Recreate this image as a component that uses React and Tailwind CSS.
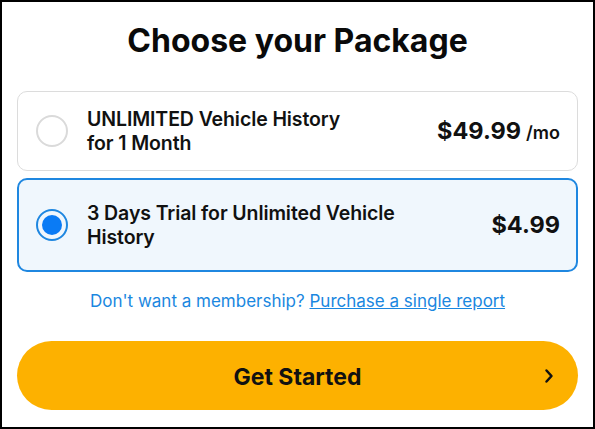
import React from 'react';

const plans = [
	{ id: 1, lines: ['UNLIMITED Vehicle History', 'for 1 Month'], price: '$49.99', suffix: '/mo', selected: false },
	{ id: 2, lines: ['3 Days Trial for Unlimited Vehicle', 'History'], price: '$4.99', suffix: null, selected: true },
];

const PlanCard = ({ plan }) => {
	return (
		<div
			className={
				plan.selected
					? 'h-[94px] rounded-[10px] border-2 border-[#1f87e0] bg-[#f0f7fd] flex items-center pl-[17px] pr-[16px]'
					: 'h-[80px] rounded-[10px] border border-[#dcdcdc] bg-white flex items-center pl-[18px] pr-[17px]'
			}
		>
			{plan.selected ? (
				<span className="w-[32px] h-[32px] rounded-full border-2 border-[#1f87e0] flex items-center justify-center shrink-0">
					<span className="w-[20px] h-[20px] rounded-full bg-[#0a7bf5]" />
				</span>
			) : (
				<span className="w-[32px] h-[32px] rounded-full border-2 border-[#dadada] shrink-0" />
			)}
			<p className="ml-[19px] text-[19.5px] leading-[24px] font-semibold text-[#111] whitespace-nowrap tracking-[-0.1px]">
				{plan.lines[0]}
				<br />
				{plan.lines[1]}
			</p>
			<div className="ml-auto flex items-baseline">
				<span className="text-[23.5px] font-bold text-[#111]">{plan.price}</span>
				{plan.suffix && <span className="ml-[5px] text-[18px] font-semibold text-[#111]">{plan.suffix}</span>}
			</div>
		</div>
	);
};

export default function App() {
	return (
		<div className="w-[595px] h-[429px] border-2 border-black bg-white px-[15px] font-['Inter',sans-serif]">
			<h1 className="pt-[19px] h-[89px] text-center text-[32px] leading-[40px] font-bold text-[#0a0a0a]">
				Choose your Package
			</h1>
			<div className="flex flex-col gap-[7px]">
				{plans.map((plan) => (
					<PlanCard key={plan.id} plan={plan} />
				))}
			</div>
			<p className="mt-[18px] text-center text-[17px] leading-[22px] text-[#1a87e0]">
				Don't want a membership? <a className="underline">Purchase a single report</a>
			</p>
			<button className="mt-[29px] w-full h-[69px] rounded-full bg-[#fdb100] relative flex items-center justify-center pt-[3px]">
				<span className="text-[23px] font-bold text-[#111]">Get Started</span>
				<svg className="absolute right-[24px] top-[27px]" width="10" height="16" viewBox="0 0 10 16" fill="none">
					<path d="M2.5 2.5 L7.5 8 L2.5 13.5" stroke="#111" strokeWidth="2.5" strokeLinecap="round" strokeLinejoin="round" />
				</svg>
			</button>
		</div>
	);
}
